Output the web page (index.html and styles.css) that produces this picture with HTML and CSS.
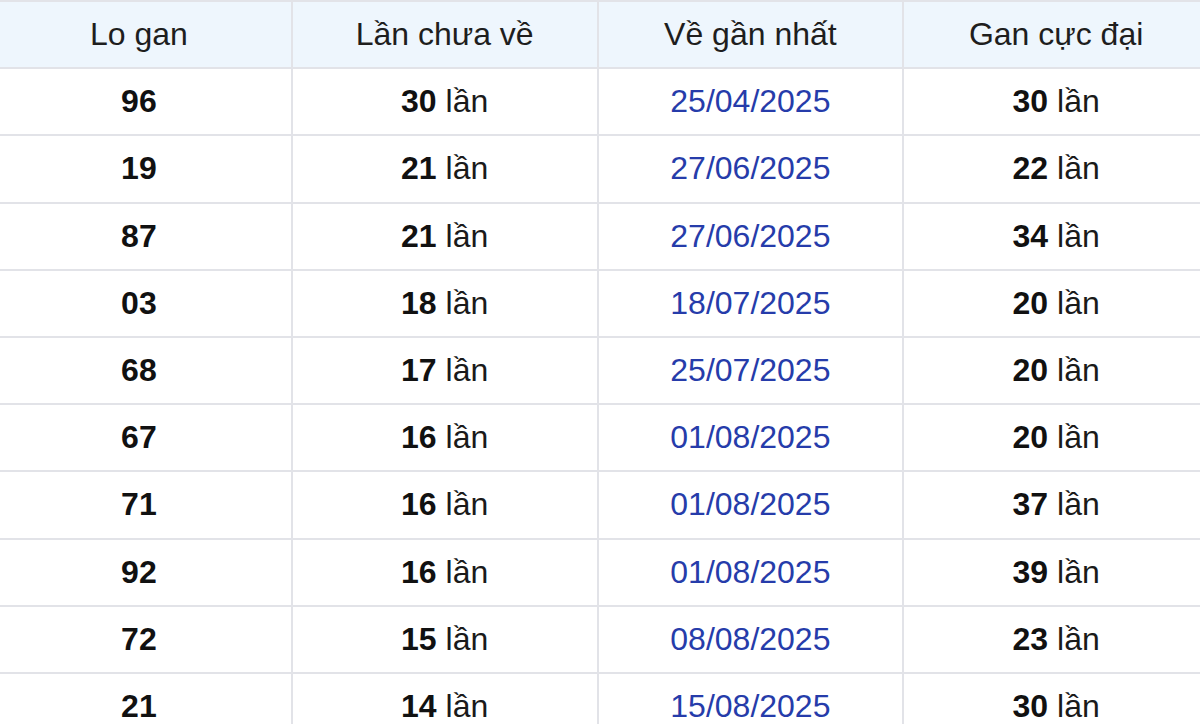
FILE: index.html
```html
<!DOCTYPE html>
<html lang="vi">
<head>
<meta charset="utf-8">
<link rel="stylesheet" href="styles.css">
</head>
<body>
<table class="gan">
  <thead>
    <tr><th>Lo gan</th><th>Lần chưa về</th><th>Về gần nhất</th><th>Gan cực đại</th></tr>
  </thead>
  <tbody>
    <tr><td class="num">96</td><td><b>30</b> lần</td><td class="date">25/04/2025</td><td><b>30</b> lần</td></tr>
    <tr><td class="num">19</td><td><b>21</b> lần</td><td class="date">27/06/2025</td><td><b>22</b> lần</td></tr>
    <tr><td class="num">87</td><td><b>21</b> lần</td><td class="date">27/06/2025</td><td><b>34</b> lần</td></tr>
    <tr><td class="num">03</td><td><b>18</b> lần</td><td class="date">18/07/2025</td><td><b>20</b> lần</td></tr>
    <tr><td class="num">68</td><td><b>17</b> lần</td><td class="date">25/07/2025</td><td><b>20</b> lần</td></tr>
    <tr><td class="num">67</td><td><b>16</b> lần</td><td class="date">01/08/2025</td><td><b>20</b> lần</td></tr>
    <tr><td class="num">71</td><td><b>16</b> lần</td><td class="date">01/08/2025</td><td><b>37</b> lần</td></tr>
    <tr><td class="num">92</td><td><b>16</b> lần</td><td class="date">01/08/2025</td><td><b>39</b> lần</td></tr>
    <tr><td class="num">72</td><td><b>15</b> lần</td><td class="date">08/08/2025</td><td><b>23</b> lần</td></tr>
    <tr><td class="num">21</td><td><b>14</b> lần</td><td class="date">15/08/2025</td><td><b>30</b> lần</td></tr>
  </tbody>
</table>
</body>
</html>
```

FILE: styles.css
```css
html, body {
  margin: 0;
  padding: 0;
  background: #ffffff;
  overflow: hidden;
}

body {
  font-family: "Liberation Sans", Arial, sans-serif;
  color: #1a1a1a;
}

.gan {
  border-collapse: collapse;
  table-layout: fixed;
  width: 1225px;
  margin: 0 0 0 -15px;
  font-size: 32px;
}

.gan th,
.gan td {
  border: 2px solid #e2e3e8;
  text-align: center;
  vertical-align: middle;
  padding: 0;
  height: 65.2px;
}

.gan th {
  background: #eef6fd;
  font-weight: normal;
  color: #1e1e1e;
}

.gan td {
  color: #1a1a1a;
}

.gan td b,
.gan td.num {
  font-weight: bold;
  color: #111111;
}

.gan td.date {
  color: #263caa;
}
```
